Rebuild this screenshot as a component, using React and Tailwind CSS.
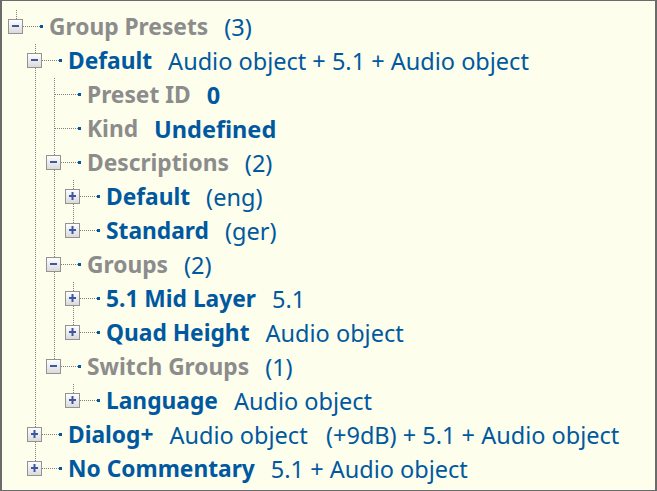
import React from 'react';

// tree data: label (bold), value, label colour, value weight
const tree = [
  {
    label: 'Group Presets', value: '(3)', gray: true,
    children: [
      {
        label: 'Default', value: 'Audio object + 5.1 + Audio object',
        children: [
          { label: 'Preset ID', value: '0', gray: true, boldValue: true },
          { label: 'Kind', value: 'Undefined', gray: true, boldValue: true },
          {
            label: 'Descriptions', value: '(2)', gray: true,
            children: [
              { label: 'Default', value: '(eng)', collapsed: true },
              { label: 'Standard', value: '(ger)', collapsed: true },
            ],
          },
          {
            label: 'Groups', value: '(2)', gray: true,
            children: [
              { label: '5.1 Mid Layer', value: '5.1', collapsed: true },
              { label: 'Quad Height', value: 'Audio object', collapsed: true },
            ],
          },
          {
            label: 'Switch Groups', value: '(1)', gray: true,
            children: [
              { label: 'Language', value: 'Audio object', collapsed: true },
            ],
          },
        ],
      },
      { label: 'Dialog+', value: 'Audio object   (+9dB) + 5.1 + Audio object', collapsed: true },
      { label: 'No Commentary', value: '5.1 + Audio object', collapsed: true },
    ],
  },
];

// flatten into rows, remembering which ancestor columns still continue
const flatten = (nodes, level = 0, guides = [], out = []) => {
  nodes.forEach((node, i) => {
    const last = i === nodes.length - 1;
    out.push({ node, level, guides, last });
    if (node.children && !node.collapsed) {
      flatten(node.children, level + 1, [...guides, !last], out);
    }
  });
  return out;
};

const COL = 19;
const ROW = 34;
const LINE = '#808080';

const Connector = ({ level, guides, last, hasBox, expanded }) => {
  const x0 = level * COL;
  const width = x0 + 37;
  return (
    <svg width={width} height={ROW} className="shrink-0">
      <defs>
        <linearGradient id="boxfill" x1="0" y1="0" x2="0" y2="1">
          <stop offset="0" stopColor="#ffffff" />
          <stop offset="1" stopColor="#d9d9d9" />
        </linearGradient>
      </defs>
      {guides.map((g, i) =>
        g ? (
          <line key={i} x1={i * COL + 10.5} y1={0} x2={i * COL + 10.5} y2={ROW}
            stroke={LINE} strokeDasharray="1 1" />
        ) : null
      )}
      <line x1={x0 + 10.5} y1={0} x2={x0 + 10.5} y2={last ? 17 : ROW}
        stroke={LINE} strokeDasharray="1 1" />
      <line x1={x0 + (hasBox ? 17 : 11)} y1={16.5} x2={x0 + 34} y2={16.5}
        stroke={LINE} strokeDasharray="1 1" />
      <rect x={x0 + 34} y={15} width={3} height={3} fill="#0059a0" />
      {hasBox && (
        <g>
          <rect x={x0 + 2.5} y={9.5} width={14} height={14} fill="url(#boxfill)" stroke="#939393" />
          <rect x={x0 + 6} y={15} width={7} height={2} fill="#3d57a3" />
          {!expanded && <rect x={x0 + 8.5} y={12} width={2} height={8} fill="#3d57a3" />}
        </g>
      )}
    </svg>
  );
};

export default function App() {
  const rows = flatten(tree);
  return (
    <div className="w-[657px] h-[491px] bg-[#fdfeec] border-y border-x-2 border-[#6b6b6b] overflow-hidden pt-[9px] pl-[4px] font-['Noto_Sans','Open_Sans',sans-serif]">
      {rows.map(({ node, level, guides, last }, i) => {
        const hasBox = !!node.children || !!node.collapsed;
        return (
          <div key={i} className="flex items-center h-[34px] whitespace-pre">
            <Connector level={level} guides={guides} last={last}
              hasBox={hasBox} expanded={hasBox && !node.collapsed} />
            <span className={`ml-[6px] text-[22.75px] leading-[34px] font-bold ${node.gray ? 'text-[#8c8c8c]' : 'text-[#0059a0]'}`}>
              {node.label}
            </span>
            <span className={`ml-[16px] text-[23.5px] leading-[34px] text-[#0059a0] ${node.boldValue ? 'font-bold' : 'font-normal'}`}>
              {node.value}
            </span>
          </div>
        );
      })}
    </div>
  );
}
